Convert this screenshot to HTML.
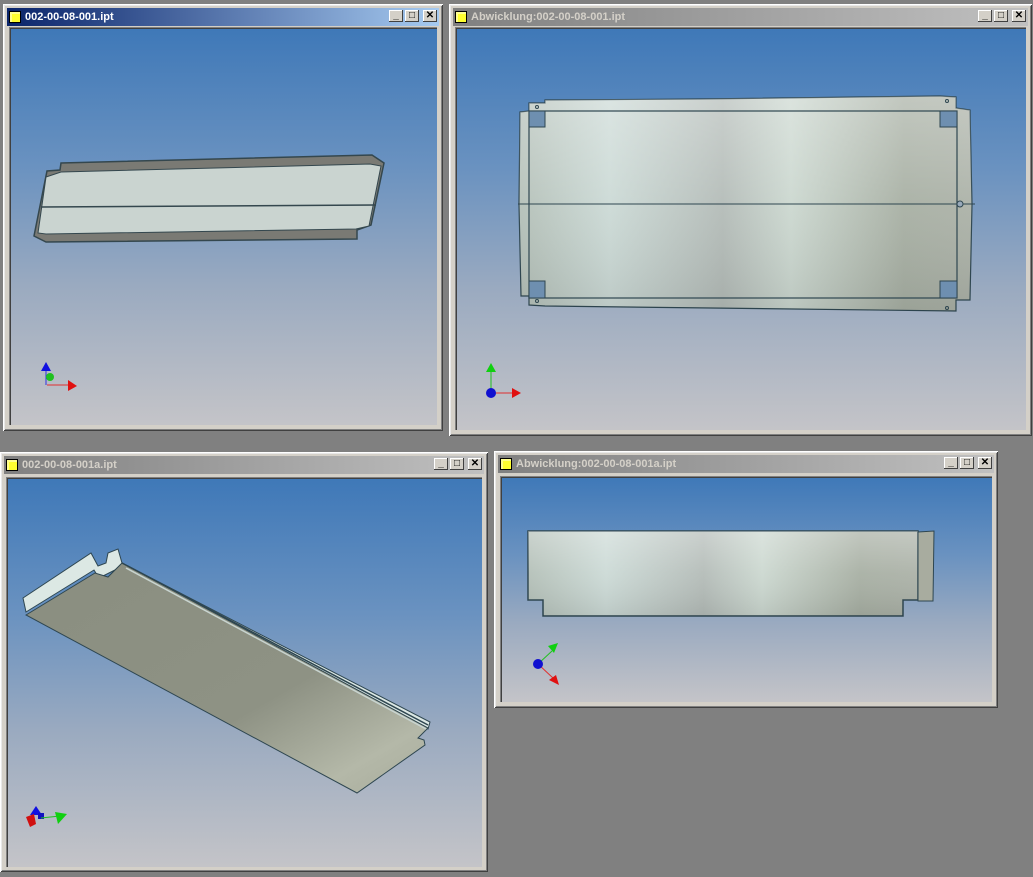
<!DOCTYPE html>
<html><head><meta charset="utf-8"><style>
body{margin:0;width:1033px;height:877px;background:#808080;position:relative;overflow:hidden;font-family:"Liberation Sans",sans-serif}
.win{position:absolute;background:#d4d0c8;box-shadow:inset 1px 1px 0 #fff,inset -1px -1px 0 #404040,inset 2px 2px 0 #e8e8e8,inset -2px -2px 0 #808080}
.tb{position:absolute;left:4px;right:4px;top:4px;height:18px;color:#d4d0c8;font-weight:bold;font-size:11px;line-height:18px;background:linear-gradient(90deg,#808080,#c0c0c0)}
.tb.act{background:linear-gradient(90deg,#0a246a,#a6caf0);color:#fff}
.tb .ic{position:absolute;left:2px;top:3px;width:10px;height:10px;background:#ffff30;border:1px solid #000;box-shadow:inset 2px 2px 0 #ffff90}
.tb span{position:absolute;left:18px}
.btn{position:absolute;top:2px;width:14px;height:12px;background:#d4d0c8;box-shadow:inset -1px -1px 0 #404040,inset 1px 1px 0 #fff;font-size:10px;color:#000;text-align:center;line-height:12px}
.vp{position:absolute;background:linear-gradient(180deg,#3e78b8 0%,#6a92c0 35%,#9aaac0 65%,#c4c4c8 100%);box-shadow:inset 1px 1px 0 #808080,inset 2px 2px 0 #404040}
svg{position:absolute;left:0;top:0}
</style></head><body>

<div class="win" style="left:3px;top:4px;width:440px;height:427px"><div class="tb act"><div class="ic"></div><span>002-00-08-001.ipt</span>
<div class="btn" style="right:36px">_</div><div class="btn" style="right:20px">□</div><div class="btn" style="right:2px">✕</div></div>
<div class="vp" style="left:6px;top:23px;width:428px;height:398px"></div></div>

<div class="win" style="left:449px;top:4px;width:583px;height:432px"><div class="tb"><div class="ic"></div><span>Abwicklung:002-00-08-001.ipt</span>
<div class="btn" style="right:36px">_</div><div class="btn" style="right:20px">□</div><div class="btn" style="right:2px">✕</div></div>
<div class="vp" style="left:6px;top:23px;width:571px;height:403px"></div></div>

<div class="win" style="left:0px;top:452px;width:488px;height:420px"><div class="tb"><div class="ic"></div><span>002-00-08-001a.ipt</span>
<div class="btn" style="right:36px">_</div><div class="btn" style="right:20px">□</div><div class="btn" style="right:2px">✕</div></div>
<div class="vp" style="left:6px;top:25px;width:476px;height:390px"></div></div>

<div class="win" style="left:494px;top:451px;width:504px;height:257px"><div class="tb"><div class="ic"></div><span>Abwicklung:002-00-08-001a.ipt</span>
<div class="btn" style="right:36px">_</div><div class="btn" style="right:20px">□</div><div class="btn" style="right:2px">✕</div></div>
<div class="vp" style="left:6px;top:25px;width:492px;height:226px"></div></div>

<svg width="1033" height="877" viewBox="0 0 1033 877">
<defs>
<linearGradient id="tex" x1="0" x2="1" y1="0" y2="0">
<stop offset="0" stop-color="#b4c0b8"/><stop offset=".2" stop-color="#ccdad6"/><stop offset=".45" stop-color="#b4bcb8"/><stop offset=".6" stop-color="#ccd8d0"/><stop offset=".85" stop-color="#a8b0a4"/><stop offset="1" stop-color="#acb2a8"/></linearGradient>
<linearGradient id="texv" x1="0" x2="0" y1="0" y2="1"><stop offset="0" stop-color="#fff" stop-opacity=".3"/><stop offset=".5" stop-color="#fff" stop-opacity=".05"/><stop offset="1" stop-color="#000" stop-opacity=".08"/></linearGradient>
<linearGradient id="g3" x1="0" y1="0" x2="1" y2="1"><stop offset="0" stop-color="#8a8e80"/><stop offset=".6" stop-color="#8e9284"/><stop offset=".85" stop-color="#b4b8a8"/><stop offset="1" stop-color="#a8ac9c"/></linearGradient>
</defs>
<!-- W1 plate -->
<polygon points="61,163 372,155 384,163 371,225 357,230 357,239 46,242 34,236 47,171 60,170" fill="#7a7a74" stroke="#34474e" stroke-width="1.5"/>
<polygon points="46,177 61,172 370,164 381,166 369,226 356,229 46,234 38,233" fill="#cad4d0" stroke="#34474e"/>
<line x1="41" y1="207" x2="376" y2="205" stroke="#34474e" stroke-width="1.5"/>
<!-- W1 axes -->
<line x1="47" y1="385" x2="70" y2="385" stroke="#e03030"/><polygon points="68,380 77,386 68,391" fill="#e01010"/>
<line x1="46" y1="385" x2="46" y2="368" stroke="#3030e0"/><polygon points="41,371 46,362 51,371" fill="#1010e0"/>
<circle cx="50" cy="377" r="4" fill="#20c020"/>
<!-- W2 flat -->
<polygon points="520,112 529,111 529,103 545,103 545,100 700,99 940,96 956,97 956,108 970,110 972,204 970,300 956,300 956,311 545,306 529,305 529,296 521,296 519,204" fill="url(#tex)" stroke="#2e4650" stroke-width="1.2"/>
<polygon points="520,112 529,111 529,103 545,103 545,100 700,99 940,96 956,97 956,108 970,110 972,204 970,300 956,300 956,311 545,306 529,305 529,296 521,296 519,204" fill="url(#texv)"/>
<rect x="529" y="111" width="428" height="187" fill="none" stroke="#2e4650" stroke-width="1.2"/>
<line x1="518" y1="204" x2="975" y2="204" stroke="#2e4650"/>
<circle cx="960" cy="204" r="3" fill="#9ab" stroke="#2e4650"/>
<g fill="#6e8fb0" stroke="#2e4650"><rect x="529" y="111" width="16" height="16"/><rect x="940" y="111" width="17" height="16"/><rect x="529" y="281" width="16" height="17"/><rect x="940" y="281" width="17" height="17"/></g>
<g fill="none" stroke="#2e4650"><circle cx="537" cy="107" r="1.5"/><circle cx="947" cy="101" r="1.5"/><circle cx="537" cy="301" r="1.5"/><circle cx="947" cy="308" r="1.5"/></g>
<!-- W2 axes -->
<line x1="491" y1="393" x2="514" y2="393" stroke="#e03030"/><polygon points="512,388 521,393 512,398" fill="#e01010"/>
<line x1="491" y1="393" x2="491" y2="372" stroke="#20c020"/><polygon points="486,372 491,363 496,372" fill="#10d010"/>
<circle cx="491" cy="393" r="5" fill="#1010d0"/>
<!-- W3 panel -->
<polygon points="23,598 91,553 98,566 106,563 108,553 118,549 122,563 430,722 428,729 123,566 99,578 94,570 26,612" fill="#dce8e4" stroke="#2e4650"/>
<polygon points="26,615 95,573 108,577 122,563 428,728 418,738 424,740 425,745 357,793" fill="url(#g3)" stroke="#2e4650"/>
<line x1="122" y1="563" x2="428" y2="725" stroke="#2e4650" stroke-width="1.5"/>
<line x1="126" y1="568" x2="426" y2="729" stroke="#c8d4d0" stroke-width="1.5"/>
<!-- W3 axes -->
<polygon points="36,806 42,815 30,815" fill="#1010e0"/><rect x="38" y="813" width="6" height="6" fill="#1010c0"/>
<line x1="41" y1="818" x2="60" y2="816" stroke="#20c020"/><polygon points="55,812 67,814 58,824" fill="#10d010"/>
<polygon points="26,817 34,814 36,824 30,827" fill="#d01010"/>
<!-- W4 panel -->
<polygon points="528,531 918,531 918,600 903,600 903,616 543,616 543,600 528,600" fill="url(#tex)" stroke="#2e4650" stroke-width="1.5"/>
<polygon points="528,531 918,531 918,600 903,600 903,616 543,616 543,600 528,600" fill="url(#texv)"/>
<polygon points="918,532 934,531 933,601 918,601" fill="#a8ac9f" stroke="#2e4650"/>
<!-- W4 axes -->
<line x1="538" y1="664" x2="552" y2="651" stroke="#20c020"/><polygon points="548,646 558,643 554,653" fill="#10d010"/>
<line x1="538" y1="664" x2="553" y2="678" stroke="#e03030"/><polygon points="549,680 559,685 556,675" fill="#e01010"/>
<circle cx="538" cy="664" r="5" fill="#1010d0"/>
</svg>
</body></html>
